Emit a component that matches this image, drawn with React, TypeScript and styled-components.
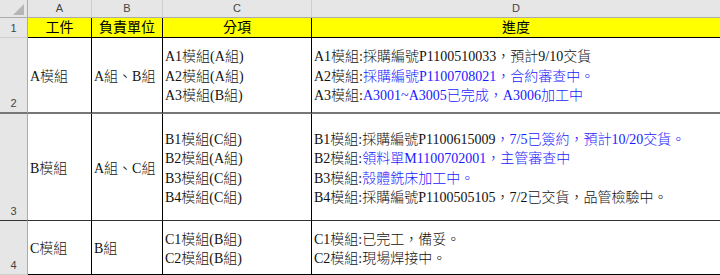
import React from "react";
import styled, { createGlobalStyle } from "styled-components";

const GlobalStyle = createGlobalStyle`
    html, body {
        margin: 0;
        padding: 0;
        background: #ffffff;
    }
    body {
        width: 720px;
        height: 275px;
        overflow: hidden;
    }
`;

const cellFont = `"Liberation Serif", "Noto Sans CJK TC", serif`;

const Sheet = styled.div`
    display: grid;
    grid-template-columns: 28px 64px 71px 149px 408px;
    grid-template-rows: 18px 20px 76px 107px 54px;
    width: 720px;
    background: #fff;
`;

const Corner = styled.div`
    background: #e6e6e6;
    border-right: 1px solid #ababab;
    border-bottom: 1px solid #ababab;
    box-sizing: border-box;
    display: flex;
    justify-content: flex-end;
    align-items: flex-end;
    padding: 0 3px 2px 0;

    &::after {
        content: "";
        width: 0;
        height: 0;
        border-left: 11px solid transparent;
        border-bottom: 11px solid #b5b5b5;
    }
`;

const ColHead = styled.div<{ $last?: boolean }>`
    background: #e6e6e6;
    border-right: ${(p) => (p.$last ? "none" : "1px solid #cfcfcf")};
    border-bottom: 1px solid #ababab;
    box-sizing: border-box;
    display: flex;
    justify-content: center;
    align-items: center;
    font-family: "Liberation Sans", Arial, sans-serif;
    font-size: 11px;
    color: #444;
    padding-bottom: 1px;
`;

const RowHead = styled.div<{ $bottom?: string }>`
    background: #e6e6e6;
    border-right: 1px solid #ababab;
    border-bottom: ${(p) => p.$bottom || "1px solid #cfcfcf"};
    box-sizing: border-box;
    display: flex;
    justify-content: center;
    align-items: flex-end;
    padding-bottom: 3px;
    font-family: "Liberation Sans", Arial, sans-serif;
    font-size: 11px;
    color: #444;
`;

const HeadCell = styled.div<{ $last?: boolean }>`
    background: #ffff00;
    border-right: ${(p) => (p.$last ? "none" : "1px solid #000")};
    border-bottom: 1px solid #000;
    box-sizing: border-box;
    display: flex;
    justify-content: center;
    align-items: flex-end;
    font-family: ${cellFont};
    font-size: 14px;
    line-height: 18px;
    color: #000;
`;

const Cell = styled.div<{ $bottom?: string; $last?: boolean }>`
    border-right: ${(p) => (p.$last ? "none" : "1px solid #000")};
    border-bottom: ${(p) => p.$bottom || "1px solid #000"};
    box-sizing: border-box;
    display: flex;
    flex-direction: column;
    justify-content: center;
    padding: 3px 0 0 2px;
    font-family: ${cellFont};
    font-size: 14px;
    font-weight: 300;
    line-height: 19.5px;
    color: #111;
    white-space: nowrap;
    overflow: hidden;
`;

const Line = styled.div``;

const Blue = styled.span`
    color: #1a1aff;
`;

type Progress = { label: string; black?: string; blue?: string };

type Row = {
    num: number;
    task: string;
    unit: string;
    items: string[];
    progress: Progress[];
    bottom?: string;
};

const rows: Row[] = [
    {
        num: 2,
        task: "A模組",
        unit: "A組、B組",
        items: ["A1模組(A組)", "A2模組(A組)", "A3模組(B組)"],
        progress: [
            { label: "A1模組:", black: "採購編號P1100510033，預計9/10交貨" },
            { label: "A2模組:", blue: "採購編號P1100708021，合約審查中。" },
            { label: "A3模組:", blue: "A3001~A3005已完成，A3006加工中" },
        ],
        bottom: "2px solid #777",
    },
    {
        num: 3,
        task: "B模組",
        unit: "A組、C組",
        items: ["B1模組(C組)", "B2模組(A組)", "B3模組(C組)", "B4模組(C組)"],
        progress: [
            { label: "B1模組:", black: "採購編號P1100615009", blue: "，7/5已簽約，預計10/20交貨。" },
            { label: "B2模組:", blue: "領料單M1100702001，主管審查中" },
            { label: "B3模組:", blue: "殼體銑床加工中。" },
            { label: "B4模組:", black: "採購編號P1100505105，7/2已交貨，品管檢驗中。" },
        ],
        bottom: "1px solid #333",
    },
    {
        num: 4,
        task: "C模組",
        unit: "B組",
        items: ["C1模組(B組)", "C2模組(B組)"],
        progress: [
            { label: "C1模組:", black: "已完工，備妥。" },
            { label: "C2模組:", black: "現場焊接中。" },
        ],
    },
];

export default function App() {
    return (
        <>
            <GlobalStyle />
            <Sheet>
                <Corner />
                <ColHead>A</ColHead>
                <ColHead>B</ColHead>
                <ColHead>C</ColHead>
                <ColHead $last>D</ColHead>

                <RowHead>1</RowHead>
                <HeadCell>工件</HeadCell>
                <HeadCell>負責單位</HeadCell>
                <HeadCell>分項</HeadCell>
                <HeadCell $last>進度</HeadCell>

                {rows.map((r) => (
                    <React.Fragment key={r.num}>
                        <RowHead $bottom={r.bottom}>{r.num}</RowHead>
                        <Cell $bottom={r.bottom}>{r.task}</Cell>
                        <Cell $bottom={r.bottom}>{r.unit}</Cell>
                        <Cell $bottom={r.bottom}>
                            {r.items.map((it) => (
                                <Line key={it}>{it}</Line>
                            ))}
                        </Cell>
                        <Cell $bottom={r.bottom} $last>
                            {r.progress.map((p) => (
                                <Line key={p.label}>
                                    {p.label}
                                    {p.black}
                                    {p.blue && <Blue>{p.blue}</Blue>}
                                </Line>
                            ))}
                        </Cell>
                    </React.Fragment>
                ))}
            </Sheet>
        </>
    );
}
